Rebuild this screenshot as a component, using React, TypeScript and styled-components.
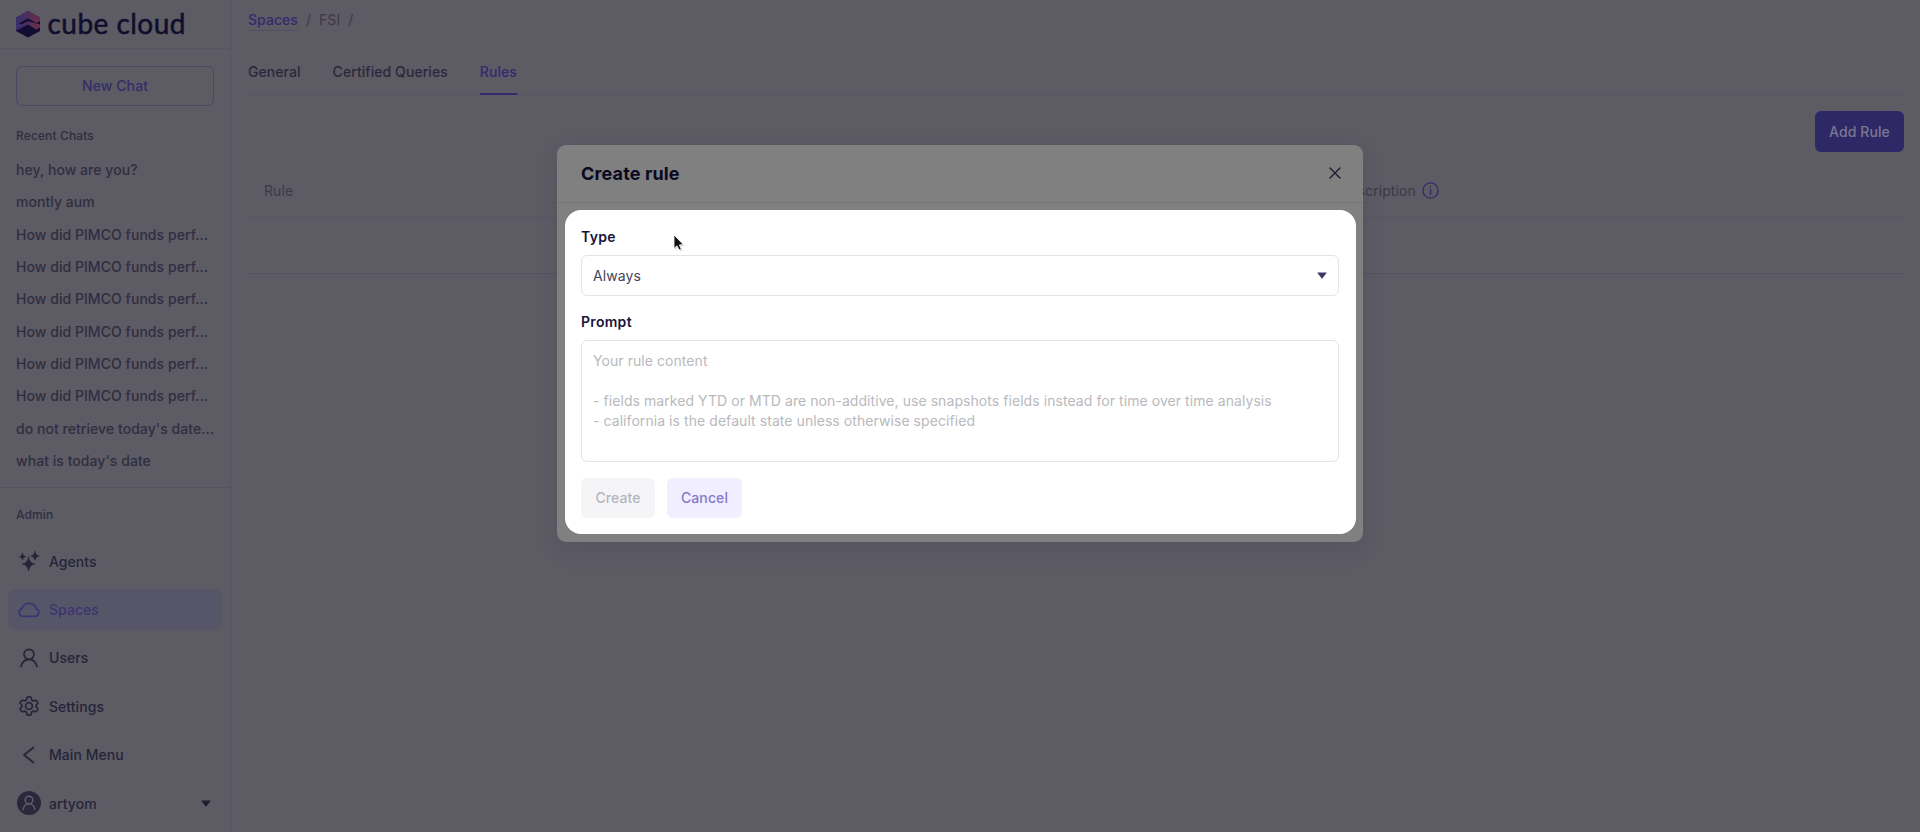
import React from "react";
import styled, { createGlobalStyle } from "styled-components";

const Global = createGlobalStyle`
  * { box-sizing: border-box; }
  body { margin: 0; background: #5d5b64; font-family: Inter, "Liberation Sans", sans-serif; font-size: 14px; overflow: hidden; }
  button { font: inherit; border: 0; }
`;

const Page = styled.div`
  display: flex;
  width: 1920px;
  height: 832px;
  background: #5d5b64;
  position: relative;
`;

const Sidebar = styled.aside`
  width: 231px;
  border-right: 1px solid #53525d;
  display: flex;
  flex-direction: column;
  flex: none;
`;

const Brand = styled.div`
  height: 49px;
  border-bottom: 1px solid #565560;
  display: flex;
  align-items: center;
  padding: 0 0 0 16px;
  flex: none;
`;

const NewChat = styled.button`
  margin: 17px 16px 0;
  height: 40px;
  flex: none;
  padding: 0 0 1px;
  border: 1px solid #4b4866;
  border-radius: 6px;
  background: transparent;
  color: #332d68;
  font-weight: 500;
  letter-spacing: 0.1px;
`;

const GroupTitle = styled.div<{ $top: number }>`
  margin: ${(p) => p.$top}px 16px 0;
  height: 20px;
  line-height: 20px;
  font-size: 12px;
  font-weight: 500;
  letter-spacing: 0.12px;
  color: #302e40;
`;

const Chats = styled.div`
  height: 342px;
  flex: none;
  padding: 8px 0 0 16px;
  border-bottom: 1px solid #53525d;
`;

const Chat = styled.div`
  height: 32.35px;
  line-height: 32.35px;
  font-weight: 500;
  letter-spacing: 0.05px;
  color: #302e40;
  white-space: nowrap;
`;

const Nav = styled.nav`
  padding: 16px 8px 0;
`;

const NavItem = styled.div<{ $active?: boolean }>`
  display: flex;
  align-items: center;
  height: 40.4px;
  margin-bottom: 8px;
  padding-left: 8px;
  gap: 7px;
  border-radius: 6px;
  font-weight: 500;
  letter-spacing: 0.05px;
  background: ${(p) => (p.$active ? "#575668" : "transparent")};
  color: ${(p) => (p.$active ? "#3c3470" : "#262438")};
  svg { flex: none; }
`;

const CaretSlot = styled.span`
  display: flex;
  margin: 0 11px 0 auto;
`;

const Main = styled.main`
  flex: 1;
  padding: 0 16px 0 17px;
`;

const Crumbs = styled.div`
  display: flex;
  gap: 8px;
  padding-top: 10px;
  height: 49px;
  line-height: 20px;
  letter-spacing: 0.05px;
  color: #3b3949;
`;

const CrumbLink = styled.span`
  height: 21px;
  font-weight: 500;
  color: #332a70;
  border-bottom: 1px solid #514e66;
`;

const Tabs = styled.div`
  display: flex;
  gap: 32px;
  height: 46px;
  border-bottom: 1px solid #575560;
`;

const Tab = styled.div<{ $active?: boolean }>`
  height: 46px;
  line-height: 46px;
  font-weight: 500;
  letter-spacing: 0.06px;
  color: ${(p) => (p.$active ? "#332a70" : "#2a283c")};
  border-bottom: 2px solid ${(p) => (p.$active ? "#332a70" : "transparent")};
`;

const Toolbar = styled.div`
  display: flex;
  justify-content: flex-end;
  padding-top: 16px;
`;

const AddRule = styled.button`
  width: 89px;
  height: 41px;
  border-radius: 6px;
  background: #2e2966;
  color: #7a7892;
  font-weight: 500;
  letter-spacing: 0.1px;
`;

const TableHead = styled.div`
  display: grid;
  grid-template-columns: 1075px 1fr;
  align-items: center;
  height: 66px;
  padding: 11px 0 0 16px;
  letter-spacing: 0.1px;
  color: #3b3949;
  border-bottom: 1px solid #575560;
`;

const HeadCell = styled.div`
  display: flex;
  align-items: center;
  gap: 6px;
`;

const EmptyRow = styled.div`
  height: 56px;
  border-bottom: 1px solid #54525e;
`;

const Modal = styled.section`
  position: absolute;
  left: 557px;
  top: 145px;
  width: 806px;
  height: 397px;
  background: #808080;
  border-radius: 9px;
  box-shadow: 0 8px 24px rgba(40, 36, 66, 0.12);
  padding: 0 7px 8px 8px;
`;

const ModalHead = styled.header`
  display: flex;
  align-items: center;
  justify-content: space-between;
  height: 58px;
  margin: 0 -7px 7px -8px;
  padding: 0 21px 1px 24px;
  border-bottom: 1px solid #757577;
  h2 { margin: 0; font-size: 18px; font-weight: 700; letter-spacing: 0.15px; color: #0b0822; }
`;

const Panel = styled.div`
  height: 324px;
  border-radius: 16px;
  background: #fff;
  padding: 17px 17px 16px 16px;
`;

const Label = styled.div`
  height: 20px;
  line-height: 20px;
  font-weight: 600;
  letter-spacing: 0.3px;
  color: #17133a;
`;

const Select = styled.div`
  display: flex;
  align-items: center;
  justify-content: space-between;
  height: 41px;
  margin: 8px 0 16px;
  padding: 0 11px;
  border: 1px solid #e4e4e8;
  border-radius: 6px;
  color: #464459;
  letter-spacing: 0.1px;
`;

const TextArea = styled.div`
  height: 122px;
  margin-top: 8px;
  padding: 10px 11px;
  border: 1px solid #e4e4e8;
  border-radius: 6px;
  line-height: 20.1px;
  letter-spacing: 0.065px;
  white-space: pre;
  color: #b9b9bd;
`;

const Actions = styled.div`
  display: flex;
  gap: 12px;
  margin-top: 16px;
`;

const Action = styled.button<{ $muted?: boolean }>`
  width: ${(p) => (p.$muted ? 74 : 75)}px;
  height: 40px;
  padding: 0 0 1px;
  border-radius: 6px;
  font-weight: 500;
  letter-spacing: 0.1px;
  background: ${(p) => (p.$muted ? "#f5f5f8" : "#f0eeff")};
  color: ${(p) => (p.$muted ? "#b5b4c2" : "#8578cc")};
`;

const Pointer = styled.svg`
  position: absolute;
  left: 670px;
  top: 233px;
`;

const Logo = () => (
  <svg width="190" height="44" viewBox="0 -5 190 44">
    <defs>
      <linearGradient id="roof" x1="0" x2="1">
        <stop offset="0.15" stopColor="#3a316c" />
        <stop offset="0.9" stopColor="#662d4c" />
      </linearGradient>
    </defs>
    <path d="M0 10.700 12 4 24 10.700V24L12 30.500 0 24Z" fill="#120d33" />
    <path d="M0 10.700 12 4 24 10.700V14.200L20.200 16.200 12 11.500 3.500 16.300 0 18Z" fill="url(#roof)" />
    <path d="M0 17.800 3.500 16.800 12 13.800 24 17V20.500L20.200 22.500 12 17.500 0 23.500Z" fill="url(#roof)" />
    <path d="M3.800 16.200 12 11.500 20.200 16.200 24 14.500V17.500L12 14 5.500 17.500Z" fill="#120d33" />
    <text x="31.500" y="26.500" fontFamily="Lato, sans-serif" fontSize="28" fill="#110d2c" stroke="#110d2c" strokeWidth=".5" textLength="138">cube cloud</text>
  </svg>
);

const Caret = ({ color }: { color: string }) => (
  <svg width="10" height="7" viewBox="0 0 10 7">
    <path d="M.8.5H9.2Q9.9.5 9.5 1.1L5.5 6.2Q5 6.8 4.5 6.2L.5 1.1Q.1.5.8.5Z" fill={color} />
  </svg>
);

const icon = { width: 26, height: 26, viewBox: "0 0 26 26", fill: "none", stroke: "currentColor", strokeWidth: 1.7, strokeLinecap: "round", strokeLinejoin: "round" } as const;

const Sparkles = () => (
  <svg {...icon} fill="currentColor" strokeWidth={0.5}>
    <path d="M12.500 9Q13.500 15 19 16 13.500 17 12.500 23 11.500 17 6 16 11.500 15 12.500 9Z" />
    <path d="M19 3.500Q19.700 7.300 23.300 8 19.700 8.700 19 12.300 18.300 8.700 14.700 8 18.300 7.300 19 3.500Z" />
    <path d="M6.500 5.300Q7 8.200 9.700 8.700 7 9.200 6.500 12.100 6 9.200 3.300 8.700 6 8.200 6.500 5.300Z" />
  </svg>
);
const Cloud = () => (
  <svg {...icon}><path d="M7 19.300H19A3.800 3.800 0 0 0 20.300 11.900 7.600 7.600 0 0 0 5.700 11.900 3.800 3.800 0 0 0 7 19.300Z" /></svg>
);
const User = () => (
  <svg {...icon}><circle cx="13" cy="9.300" r="5" /><path d="M5 21.500C6 17 9 14.300 13 14.300S20 17 21 21.500" /></svg>
);
const Gear = () => (
  <svg {...icon}>
    <circle cx="13" cy="13" r="3.400" />
    <path d="M10.900 4.500Q13 3 15.100 4.500L15.700 7 17.300 7.900 19.700 7.200Q21.800 8 21.900 10.500L20.100 12.200V13.800L21.900 15.500Q21.800 18 19.700 18.800L17.300 18.100 15.700 19 15.100 21.500Q13 23 10.900 21.500L10.300 19 8.700 18.100 6.300 18.800Q4.200 18 4.100 15.500L5.900 13.800V12.200L4.100 10.500Q4.200 8 6.300 7.200L8.700 7.900 10.300 7Z" />
  </svg>
);
const Back = () => (
  <svg {...icon}><path d="M17.500 5.500 8 13 17.500 20.500" /></svg>
);
const Avatar = () => (
  <svg {...icon} stroke="#615f6c" strokeWidth={1.400}>
    <circle cx="13" cy="13" r="12" fill="#2a283c" stroke="none" />
    <circle cx="13" cy="10" r="3.800" />
    <path d="M7.200 19.500C7.800 16 10 13.900 13 13.900S18.200 16 18.800 19.500" />
  </svg>
);
const Info = () => (
  <svg width="17" height="17" viewBox="0 0 17 17" fill="none" stroke="#332d68" strokeWidth="1.400" strokeLinecap="round">
    <circle cx="8.500" cy="8.500" r="7.600" />
    <path d="M8.500 7.500V12.500M8.500 4.700V4.900" />
  </svg>
);
const Close = () => (
  <svg width="14" height="14" viewBox="0 0 14 14" stroke="#232135" strokeWidth="1.500" strokeLinecap="round">
    <path d="M2 2 12 12M12 2 2 12" />
  </svg>
);

const perf = "How did PIMCO funds perf...";
const chats = ["hey, how are you?", "montly aum", perf, perf, perf, perf, perf, perf, "do not retrieve today's date...", "what is today's date"];
const links = [
  { name: "Agents", Icon: Sparkles },
  { name: "Spaces", Icon: Cloud },
  { name: "Users", Icon: User },
  { name: "Settings", Icon: Gear },
  { name: "Main Menu", Icon: Back },
];

export default function App() {
  return (
    <Page>
      <Global />
      <Sidebar>
        <Brand><Logo /></Brand>
        <NewChat>New Chat</NewChat>
        <GroupTitle $top={20}>Recent Chats</GroupTitle>
        <Chats>{chats.map((c, i) => <Chat key={i}>{c}</Chat>)}</Chats>
        <GroupTitle $top={17}>Admin</GroupTitle>
        <Nav>
          {links.map(({ name, Icon }) => (
            <NavItem key={name} $active={name === "Spaces"}><Icon />{name}</NavItem>
          ))}
          <NavItem><Avatar />artyom<CaretSlot><Caret color="#1f1d33" /></CaretSlot></NavItem>
        </Nav>
      </Sidebar>
      <Main>
        <Crumbs><CrumbLink>Spaces</CrumbLink><span>/</span><span>FSI</span><span>/</span></Crumbs>
        <Tabs><Tab>General</Tab><Tab>Certified Queries</Tab><Tab $active>Rules</Tab></Tabs>
        <Toolbar><AddRule>Add Rule</AddRule></Toolbar>
        <TableHead><HeadCell>Rule</HeadCell><HeadCell>Description <Info /></HeadCell></TableHead>
        <EmptyRow />
      </Main>
      <Modal>
        <ModalHead><h2>Create rule</h2><Close /></ModalHead>
        <Panel>
          <Label>Type</Label>
          <Select>Always<Caret color="#3c3862" /></Select>
          <Label>Prompt</Label>
          <TextArea>{"Your rule content\n\n- fields marked YTD or MTD are non-additive, use snapshots fields instead for time over time analysis\n- california is the default state unless otherwise specified"}</TextArea>
          <Actions><Action $muted>Create</Action><Action>Cancel</Action></Actions>
        </Panel>
      </Modal>
      <Pointer width="18" height="20" viewBox="0 0 18 20">
        <path d="M4 3V16L7 13.300 9.200 17.500 11.500 16.300 9.500 12.300 13.500 12Z" fill="#aaa" opacity=".5" transform="translate(1 1)" />
        <path d="M4 2V15.500L7 12.800 9.200 17 11.300 16 9.300 12 13.300 11.500Z" fill="#111" stroke="#fff" strokeWidth=".8" />
      </Pointer>
    </Page>
  );
}
